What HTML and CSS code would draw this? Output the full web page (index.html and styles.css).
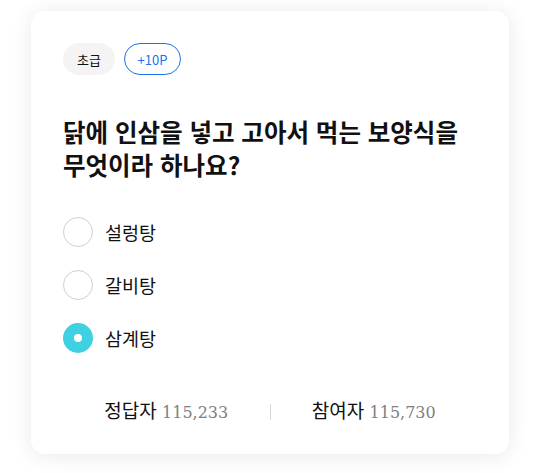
FILE: index.html
```html
<!DOCTYPE html>
<html lang="ko">
<head>
<meta charset="utf-8">
<link rel="stylesheet" href="styles.css">
</head>
<body>
<div class="page">
  <div class="card">
    <div class="tags">
      <span class="tag tag-level">초급</span>
      <span class="tag tag-point">+10P</span>
    </div>
    <h1 class="question">닭에 인삼을 넣고 고아서 먹는 보양식을<br>무엇이라 하나요?</h1>
    <ul class="options">
      <li class="option"><span class="radio"></span><span class="label">설렁탕</span></li>
      <li class="option"><span class="radio"></span><span class="label">갈비탕</span></li>
      <li class="option selected"><span class="radio"></span><span class="label">삼계탕</span></li>
    </ul>
    <div class="stats">
      <div class="stat"><span class="stat-label">정답자</span> <span class="stat-num">115,233</span></div>
      <div class="divider"></div>
      <div class="stat"><span class="stat-label">참여자</span> <span class="stat-num">115,730</span></div>
    </div>
  </div>
</div>
</body>
</html>
```

FILE: styles.css
```css
* { box-sizing: border-box; }
html, body { margin: 0; padding: 0; background: #ffffff; }
body {
  font-family: "Noto Sans CJK KR", "Noto Sans", sans-serif;
  color: #111;
}
.page {
  width: 540px;
  height: 473px;
  padding: 11px 31px 19px 31px;
}
.card {
  width: 478px;
  height: 443px;
  background: #fff;
  border-radius: 14px;
  box-shadow: 0 2px 22px rgba(0, 0, 0, 0.09);
  padding: 32px 32px 0 32px;
}
.tags {
  display: flex;
  gap: 9px;
}
.tag {
  display: inline-flex;
  align-items: center;
  justify-content: center;
  height: 32px;
  border-radius: 16px;
  font-size: 13px;
}
.tag-level {
  width: 52px;
  background: #f4f4f4;
  color: #111;
}
.tag-point {
  width: 57px;
  border: 1px solid #1a73f0;
  color: #1a73f0;
}
.question {
  margin: 40px 0 0 0;
  font-size: 24.5px;
  font-weight: 700;
  line-height: 33px;
  color: #111;
}
.options {
  list-style: none;
  margin: 36px 0 0 0;
  padding: 0;
  display: flex;
  flex-direction: column;
  gap: 23px;
}
.option {
  display: flex;
  align-items: center;
  height: 30px;
}
.radio {
  width: 30px;
  height: 30px;
  border-radius: 50%;
  border: 1.5px solid #cfcfcf;
  margin-right: 12px;
  flex: none;
}
.selected .radio {
  border: 11px solid #3fd0e1;
  background: #fff;
}
.label {
  font-size: 18.5px;
  color: #111;
}
.stats {
  margin-top: 44px;
  display: flex;
  align-items: center;
}
.stat {
  flex: 1;
  text-align: center;
  font-size: 19px;
  line-height: 26px;
}
.stat-label { color: #111; }
.stat-num {
  font-family: "DejaVu Serif", "Liberation Serif", serif;
  font-size: 16px;
  color: #808080;
}
.divider {
  width: 1px;
  height: 16px;
  background: #d8d8d8;
}
```
